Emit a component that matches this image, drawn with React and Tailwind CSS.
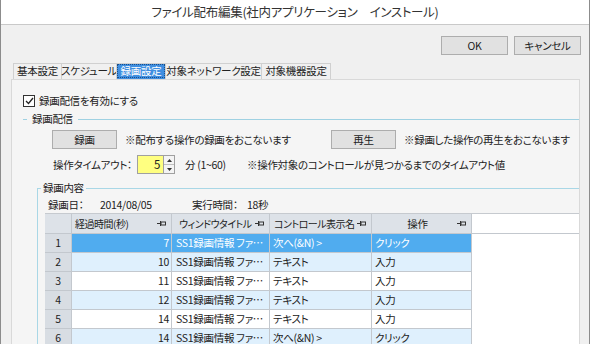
const font = "font-['Noto_Sans_CJK_JP','Noto_Sans',sans-serif] [font-feature-settings:'palt'] tracking-[-0.3px]";

const tabs = [
  { label: '基本設定', w: 'w-[49px]' },
  { label: 'スケジュール', w: 'w-[56px]' },
  { label: '録画設定', w: 'w-[50px]', active: true },
  { label: '対象ネットワーク設定', w: 'w-[97px]' },
  { label: '対象機器設定', w: 'w-[70px]' },
];

const rows = [
  { n: 1, t: 7, title: 'SS1録画情報 ファ…', ctrl: '次へ(&N) >', op: 'クリック' },
  { n: 2, t: 10, title: 'SS1録画情報 ファ…', ctrl: 'テキスト', op: '入力' },
  { n: 3, t: 11, title: 'SS1録画情報 ファ…', ctrl: 'テキスト', op: '入力' },
  { n: 4, t: 12, title: 'SS1録画情報 ファ…', ctrl: 'テキスト', op: '入力' },
  { n: 5, t: 14, title: 'SS1録画情報 ファ…', ctrl: 'テキスト', op: '入力' },
  { n: 6, t: 14, title: 'SS1録画情報 ファ…', ctrl: '次へ(&N) >', op: 'クリック' },
];

const Pin = () => (
  <svg width="9" height="7" viewBox="0 0 9 7" className="shrink-0">
    <path d="M0 3.5H3.5M3.5 1V6" stroke="#333" strokeWidth="1" fill="none" />
    <rect x="4" y="2" width="4.5" height="3" fill="none" stroke="#333" strokeWidth="1" />
  </svg>
);

const HeadCell = ({ w, label, pad }) => (
  <div className={`${w} h-full flex items-center border-r border-[#c3c8ce] pr-[5px] ${pad}`}>
    <span className="flex-1 whitespace-nowrap text-[10px] tracking-[-0.5px]">{label}</span>
    <Pin />
  </div>
);

const WinButton = ({ children, w = 'w-[67px]' }) => (
  <button className={`${w} h-[19px] shrink-0 bg-[#e1e1e1] border border-[#adadad] text-[10.5px] text-[#222] flex items-center justify-center whitespace-nowrap`}>
    {children}
  </button>
);

export default function App() {
  return (
    <div className={`w-[590px] h-[344px] overflow-hidden bg-[#f0f0f0] border-x border-[#8c8c8c] text-[#222] whitespace-nowrap ${font}`}>
      <div className="h-[25px] bg-white border-b border-[#c9c9c9] flex items-center justify-center text-[12.5px] text-[#333]">
        ファイル配布編集(社内アプリケーション　インストール)
      </div>

      <div className="flex justify-end gap-[6px] pr-[8px] pt-[11px]">
        <WinButton>OK</WinButton>
        <WinButton>キャンセル</WinButton>
      </div>

      <div className="flex pl-[12px] mt-[8px] h-[16px] text-[10.5px] leading-none">
        {tabs.map((t) => (
          <div
            key={t.label}
            className={`${t.w} h-full flex items-center justify-center border border-b-0 border-[#d0d0d0] -ml-px first:ml-0 ${
              t.active ? 'bg-[#3f8ee0] text-white outline outline-1 outline-dotted outline-[#1a4f8a] -outline-offset-2' : 'bg-[#f0f0f0]'
            }`}
          >
            {t.label}
          </div>
        ))}
      </div>

      <div className="ml-[10px] mr-[9px] h-[300px] border border-[#d9d9d9] bg-[#f5f5f5] text-[10.5px]">
        <div className="flex items-center gap-[4px] pl-[11px] pt-[15px] h-[27px]">
          <div className="w-[12px] h-[12px] border border-[#333] bg-white flex items-center justify-center">
            <svg width="9" height="8" viewBox="0 0 9 8">
              <path d="M1 4L3.5 6.5L8 1" stroke="#222" strokeWidth="1.3" fill="none" />
            </svg>
          </div>
          <span>録画配信を有効にする</span>
        </div>

        <div className="flex items-center mt-[4px] h-[16px]">
          <div className="w-[4px] h-px bg-[#9fd1e2] ml-[11px]" />
          <span className="px-[5px]">録画配信</span>
          <div className="flex-1 h-px bg-[#9fd1e2]" />
        </div>

        <div className="flex items-center mt-[3px] h-[19px]">
          <div className="ml-[40px]">
            <WinButton w="w-[65px]">録画</WinButton>
          </div>
          <span className="ml-[8px] w-[206px]">※配布する操作の録画をおこないます</span>
          <WinButton w="w-[65px]">再生</WinButton>
          <span className="ml-[8px]">※録画した操作の再生をおこないます</span>
        </div>

        <div className="flex items-center mt-[6px] h-[19px]">
          <span className="ml-[41px] w-[84px]">操作タイムアウト：</span>
          <div className="w-[26px] h-[19px] bg-[#ffff80] border border-[#a0a0a0] border-r-0 flex items-center justify-end pr-[3px] text-[11.5px]">5</div>
          <div className="w-[12px] h-[19px] border border-[#a0a0a0] bg-[#f4f4f4] flex flex-col">
            <div className="flex-1 flex items-center justify-center border-b border-[#c0c0c0]">
              <svg width="5" height="3" viewBox="0 0 5 3"><path d="M0 3L2.5 0L5 3Z" fill="#333" /></svg>
            </div>
            <div className="flex-1 flex items-center justify-center">
              <svg width="5" height="3" viewBox="0 0 5 3"><path d="M0 0L2.5 3L5 0Z" fill="#333" /></svg>
            </div>
          </div>
          <span className="ml-[10px] w-[62px]">分 (1~60)</span>
          <span>※操作対象のコントロールが見つかるまでのタイムアウト値</span>
        </div>

        <div className="relative mt-[14px] ml-[25px] border-l border-t border-[#a9d7e6] h-[200px]">
          <span className="absolute -top-[9px] left-[3px] px-[2px] bg-[#f5f5f5] leading-[16px]">録画内容</span>
          <div className="flex items-center h-[16px] mt-[8px] pl-[10px]">
            <span className="w-[52px]">録画日：</span>
            <span className="w-[92px]">2014/08/05</span>
            <span className="w-[55px]">実行時間：</span>
            <span>18秒</span>
          </div>

          <div className="ml-[7px] bg-white border-t border-[#c6cacf]">
            <div className="flex h-[20px] border-b border-[#c3c8ce]">
              <div className="w-[27px] h-full bg-[#dde2e8] border-r border-[#c3c8ce]" />
              <div className="flex h-full bg-[#dde2e8]">
                <HeadCell w="w-[100px]" label="経過時間(秒)" pad="pl-[3px]" />
                <HeadCell w="w-[98px]" label="ウィンドウタイトル" pad="pl-[7px]" />
                <HeadCell w="w-[102px]" label="コントロール表示名" pad="pl-[4px]" />
                <div className="w-[100px] h-full flex items-center border-r border-[#c3c8ce] pr-[5px]">
                  <span className="flex-1 text-center pl-[6px]">操作</span>
                  <Pin />
                </div>
              </div>
            </div>
            {rows.map((r) => {
              const sel = r.n === 1;
              const bg = sel ? 'bg-[#50acef] text-white' : r.n % 2 === 0 ? 'bg-[#dff0fd]' : 'bg-white';
              return (
                <div key={r.n} className="flex h-[19px]">
                  <div className="w-[27px] h-full bg-[#d8dde3] border-r border-b border-[#c3c8ce] flex items-center justify-center">
                    {r.n}
                  </div>
                  <div className={`flex h-full ${bg}`}>
                    <div className="w-[100px] h-full border-r border-b border-[#c3c8ce] flex items-center justify-end pr-[2px]">{r.t}</div>
                    <div className="w-[98px] h-full border-r border-b border-[#c3c8ce] flex items-center pl-[4px] overflow-hidden">{r.title}</div>
                    <div className="w-[102px] h-full border-r border-b border-[#c3c8ce] flex items-center pl-[3px]">{r.ctrl}</div>
                    <div className="w-[100px] h-full border-r border-b border-[#c3c8ce] flex items-center pl-[3px]">{r.op}</div>
                  </div>
                </div>
              );
            })}
          </div>
        </div>
      </div>
    </div>
  );
}
